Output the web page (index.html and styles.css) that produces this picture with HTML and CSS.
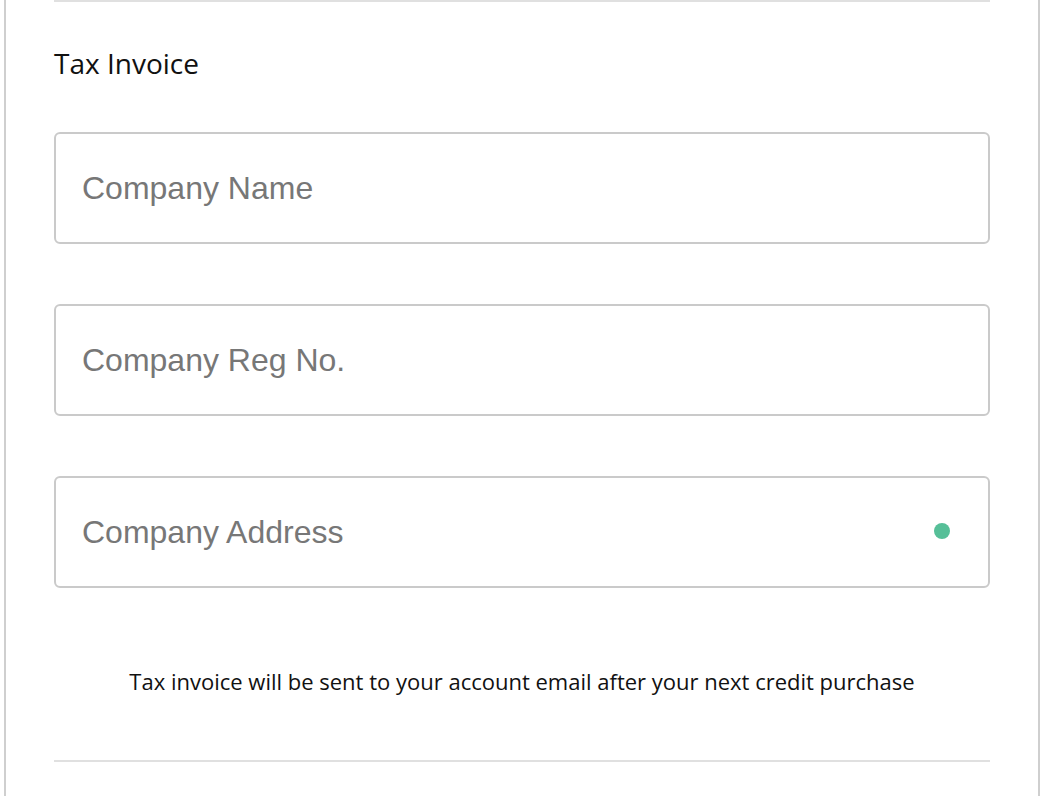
FILE: index.html
```html
<!DOCTYPE html>
<html lang="en">
<head>
    <meta charset="UTF-8">
    <meta name="viewport" content="width=device-width, initial-scale=1.0">
    <title>Tax Invoice</title>
    <link rel="stylesheet" href="styles.css">
</head>
<body>

<div class="panel">
    <div class="section">
        <h2 class="section-title">Tax Invoice</h2>
        <div class="field">
            <input type="text" placeholder="Company Name">
        </div>
        <div class="field">
            <input type="text" placeholder="Company Reg No.">
        </div>
        <div class="field">
            <input type="text" placeholder="Company Address">
            <span class="status-dot"></span>
        </div>
        <p class="note">Tax invoice will be sent to your account email after your next credit purchase</p>
    </div>
</div>

</body>
</html>
```

FILE: styles.css
```css
body {
    margin: 0;
    font-family: 'Open Sans', sans-serif;
    background: #fff;
    color: #111;
}
.panel {
    margin: 0 2px 0 4px;
    height: 796px;
    border-left: 2px solid #cfcfcf;
    border-right: 2px solid #cfcfcf;
    padding: 0 48px;
    box-sizing: border-box;
}
.section {
    border-top: 2px solid #e0e0e0;
    border-bottom: 2px solid #e0e0e0;
    padding: 0 0 64px;
}
.section-title {
    margin: 0;
    padding: 42px 0 0;
    font-size: 28px;
    font-weight: 400;
    line-height: 38px;
    color: #111;
}
.field {
    position: relative;
    margin-top: 50px;
}
.field + .field {
    margin-top: 60px;
}
.field input {
    display: block;
    width: 100%;
    height: 112px;
    box-sizing: border-box;
    padding: 0 26px;
    border: 2px solid #cacaca;
    border-radius: 6px;
    font-family: 'Liberation Sans', Arial, sans-serif;
    font-size: 32px;
    color: #333;
    background: #fff;
}
.field input::placeholder {
    color: #777;
}
.field input:focus {
    outline: none;
}
.status-dot {
    position: absolute;
    right: 40px;
    top: 47px;
    width: 16px;
    height: 16px;
    border-radius: 50%;
    background: #56bf98;
}
.note {
    margin: 78px 0 0;
    text-align: center;
    font-size: 22px;
    line-height: 30px;
    color: #111;
}
```
